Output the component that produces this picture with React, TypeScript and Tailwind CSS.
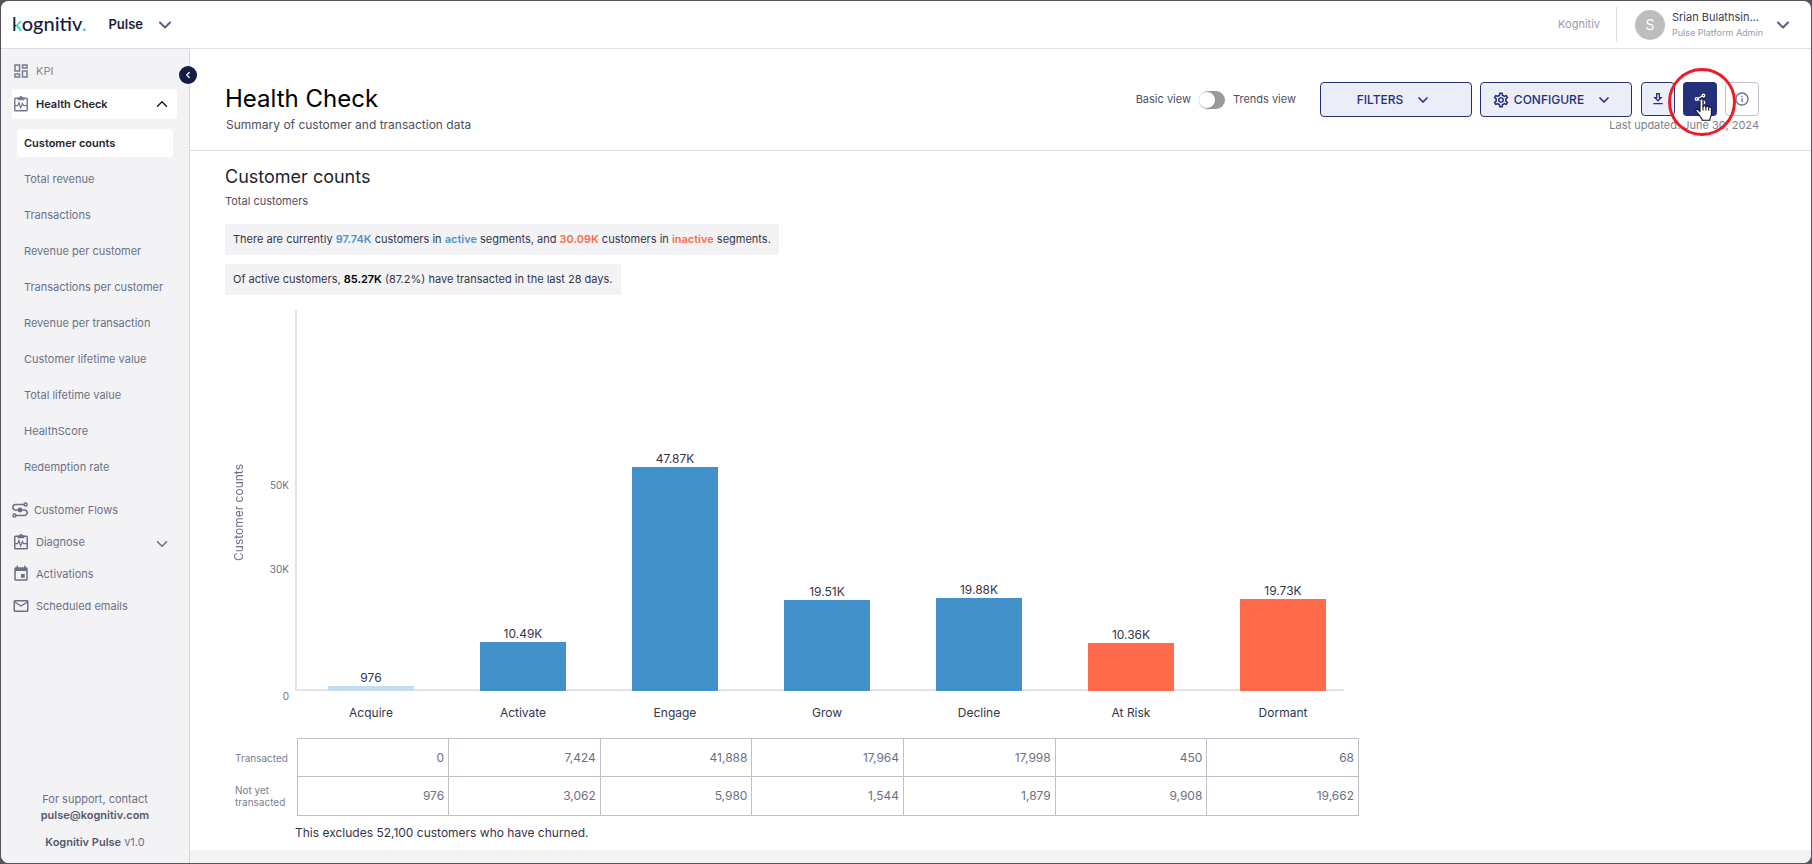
import React from "react";
import { ChevronDown, ChevronLeft, ChevronUp } from "lucide-react";
import { MdEvent, MdMailOutline, MdOutlineDashboard, MdOutlineDownload, MdOutlineInfo, MdOutlineSettings } from "react-icons/md";

const metrics = [
  "Total revenue",
  "Transactions",
  "Revenue per customer",
  "Transactions per customer",
  "Revenue per transaction",
  "Customer lifetime value",
  "Total lifetime value",
  "HealthScore",
  "Redemption rate",
];

const segments = [
  { name: "Acquire", label: "976", value: 976, transacted: "0", pending: "976", color: "bg-[#c5dbf2]" },
  { name: "Activate", label: "10.49K", value: 10490, transacted: "7,424", pending: "3,062", color: "bg-[#4291cb]" },
  { name: "Engage", label: "47.87K", value: 47870, transacted: "41,888", pending: "5,980", color: "bg-[#4291cb]" },
  { name: "Grow", label: "19.51K", value: 19510, transacted: "17,964", pending: "1,544", color: "bg-[#4291cb]" },
  { name: "Decline", label: "19.88K", value: 19880, transacted: "17,998", pending: "1,879", color: "bg-[#4291cb]" },
  { name: "At Risk", label: "10.36K", value: 10360, transacted: "450", pending: "9,908", color: "bg-[#ff6b4a]" },
  { name: "Dormant", label: "19.73K", value: 19730, transacted: "68", pending: "19,662", color: "bg-[#ff6b4a]" },
];

const PIXELS_PER_THOUSAND = 4.68;

function ClipboardPulse() {
  return (
    <svg viewBox="0 0 18 18" className="h-[18px] w-[18px] shrink-0" fill="none" stroke="currentColor" strokeWidth="1.5">
      <rect x="2.75" y="3.25" width="12.5" height="12.5" rx="0.8" />
      <path d="M5.6 5.2V2.6h1.8C7.4 1.5 8.1.9 9 .9s1.6.6 1.6 1.7h1.8v2.6z" fill="currentColor" stroke="none" />
      <path d="M3 10.6h2.7l1.2-3 1.8 5.4 1.7-4.6 1.2 2.2H15" strokeWidth="1.2" />
    </svg>
  );
}

function FlowIcon() {
  return (
    <svg viewBox="0 0 16 16" className="h-4 w-4 shrink-0" fill="none" stroke="currentColor" strokeWidth="1.5">
      <circle cx="13.6" cy="2.4" r="1.5" />
      <circle cx="2.4" cy="13.6" r="1.5" />
      <path d="M12 2.4H3.6a2.8 2.8 0 0 0 0 5.6h8.8a2.8 2.8 0 0 1 0 5.6H4" />
      <circle cx="8" cy="8" r="1.7" fill="currentColor" />
    </svg>
  );
}

function ShareIcon() {
  return (
    <svg viewBox="0 0 24 24" className="h-3 w-3" fill="none" stroke="currentColor" strokeWidth="2.4">
      <circle cx="19" cy="5" r="2.6" />
      <circle cx="5" cy="12" r="2.6" />
      <circle cx="19" cy="19" r="2.6" />
      <path d="M7.5 11 16.5 6M7.5 13l9 5" />
    </svg>
  );
}

function PointerHand() {
  return (
    <svg viewBox="0 0 18 24" className="absolute top-4 left-3 h-6 w-[18px]" fill="#fff" stroke="#111" strokeWidth="1.1" strokeLinejoin="round">
      <path d="M5 13.6V2.4C5 .3 8 .3 8 2.4v6.2c.3-1.2 2.7-1.2 2.9.3.5-1 2.6-.8 2.8.6.7-.8 2.7-.5 2.7 1.2v5.2c0 2.4-1.4 3.4-1.4 4.6v1.8H7v-1.4c-1.2-1-2.2-3-3.2-4.6C2.8 14.9.6 13.7.7 12.3c.2-1.4 2.1-1.4 4.3 1.3z" />
      <path d="M8 8.4v4M10.9 9v3.6M13.7 9.8v3" fill="none" />
    </svg>
  );
}

function Sidebar() {
  const row = "flex h-4 items-center gap-[6px] text-[11px] leading-4 text-[#6b7087]";
  return (
    <aside className="relative flex w-[189px] shrink-0 flex-col border-r border-[#d3d4da] bg-[#f3f3f6]">
      <button aria-label="Collapse menu" className="absolute top-[17px] -right-[8px] flex h-[18px] w-[18px] items-center justify-center rounded-full bg-[#151c45] text-white">
        <ChevronLeft className="h-[10px] w-[10px]" strokeWidth={3} />
      </button>
      <nav className="flex flex-col pt-[14px]">
        <a href="#kpi" className="flex h-4 items-center gap-[6px] pl-[11px] text-[11px] leading-4 text-[#85889a]">
          <MdOutlineDashboard className="h-[18px] w-[18px] shrink-0 text-[#777b90]" />
          KPI
        </a>
        <div className="mt-[10px] mr-3 ml-[11px] rounded-[4px] bg-white">
          <button className="flex h-[30px] w-full items-center gap-[6px] pr-[6px] text-[11px] font-semibold text-[#1e1f33]">
            <span className="text-[#777b90]"><ClipboardPulse /></span>
            Health Check
            <ChevronUp className="ml-auto h-[18px] w-[18px]" />
          </button>
        </div>
        <a href="#customer-counts" className="mt-[10px] mr-4 ml-4 flex h-7 items-center rounded-[4px] bg-white pl-[7px] text-[11px] font-semibold text-[#1e1f33]">
          Customer counts
        </a>
        <ul className="mt-1 flex flex-col">
          {metrics.map((m) => (
            <li key={m} className="flex h-9 items-center pl-[23px]">
              <a href="#metric" className="text-[11px] leading-4 text-[#6b7087]">{m}</a>
            </li>
          ))}
        </ul>
        <div className="mt-[17px] flex flex-col gap-4 pr-[18px] pl-[11px]">
          <a href="#flows" className={row}><FlowIcon />Customer Flows</a>
          <button className={row}><ClipboardPulse />Diagnose<ChevronDown className="mt-1 ml-auto h-[18px] w-[18px]" /></button>
          <a href="#activations" className={row}><MdEvent className="h-[18px] w-[18px]" />Activations</a>
          <a href="#emails" className={row}><MdMailOutline className="h-[18px] w-[18px]" />Scheduled emails</a>
        </div>
      </nav>
      <div className="mt-auto pb-[13px] text-center text-[11px] leading-4 text-[#6b7087]">
        <p>For support, contact</p>
        <a href="mailto:pulse@kognitiv.com" className="font-semibold text-[#55596f]">pulse@kognitiv.com</a>
        <p className="mt-[11px]"><span className="font-semibold text-[#55596f]">Kognitiv Pulse</span> v1.0</p>
      </div>
    </aside>
  );
}

function TopBar() {
  return (
    <header className="flex h-12 items-center border-b border-[#dddde3] bg-white pr-[18px] pl-[11px]">
      <a href="#home" className="pb-[3px] font-[Lato,sans-serif] text-[20px] leading-6 font-medium text-[#151c45]">
        <span className="bg-[linear-gradient(90deg,#151c45_4px,#1fd6cd_4px)] bg-clip-text text-transparent">k</span>ognitiv<span className="text-[#1fd6cd]">.</span>
      </a>
      <button className="ml-[22px] flex items-center gap-3 text-[13px] font-semibold text-[#1e1f33]">
        Pulse
        <ChevronDown className="h-5 w-5 text-[#5d6178]" strokeWidth={2.5} />
      </button>
      <span className="ml-auto text-[11px] text-[#9a9cae]">Kognitiv</span>
      <button className="ml-4 flex h-[35px] items-center border-l border-[#dddde3] pl-[18px] text-left">
        <span className="flex h-[30px] w-[30px] items-center justify-center rounded-full bg-[#bdbdbd] text-[14px] text-white">S</span>
        <span className="ml-[7px] flex w-[93px] flex-col">
          <span className="text-[11px] leading-4 text-[#3b3c4e]">Srian Bulathsin...</span>
          <span className="text-[9px] leading-4 whitespace-nowrap text-[#9a9cae]">Pulse Platform Admin</span>
        </span>
        <ChevronDown className="ml-2 h-5 w-5 text-[#5d6178]" strokeWidth={2.5} />
      </button>
    </header>
  );
}

function PageHeader() {
  const menu = "flex h-[35px] w-[152px] items-center justify-center rounded-[4px] border border-[#24317a] bg-[#ebedf8] text-[12px] font-medium text-[#24317a]";
  return (
    <section className="flex h-[102px] items-start justify-between border-b border-[#dddde3] pr-[52px] pl-[35px]">
      <div className="pt-[34px]">
        <h1 className="text-[24px] leading-8 text-black">Health Check</h1>
        <p className="pl-[1px] text-[12px] leading-5 text-[#4d4f61]">Summary of customer and transaction data</p>
      </div>
      <div className="flex flex-col items-end pt-[33px]">
        <div className="flex items-start">
          <label className="mr-[24px] flex h-[35px] items-center gap-2 text-[11px] text-[#4d4f61]">
            Basic view
            <input type="checkbox" role="switch" className="peer sr-only" />
            <span className="flex h-[18px] w-[26px] items-center rounded-full bg-[#9b9b9b]">
              <span className="h-4 w-4 rounded-full bg-white shadow-sm" />
            </span>
            Trends view
          </label>
          <button className={menu + " gap-3 pr-1"}>FILTERS<ChevronDown className="h-4 w-4" strokeWidth={2.5} /></button>
          <button className={menu + " ml-2 pr-2"}>
            <MdOutlineSettings className="mr-1 h-[18px] w-[18px]" />CONFIGURE<ChevronDown className="ml-3 h-4 w-4" strokeWidth={2.5} />
          </button>
          <div className="ml-[9px] flex gap-2">
            <button aria-label="Download" className="flex h-[34px] w-[34px] items-center justify-center rounded-[4px] border border-[#24317a] bg-[#ebedf8] text-[#24317a]">
              <MdOutlineDownload className="h-4 w-4" />
            </button>
            <div className="relative">
              <button aria-label="Share" className="flex h-[34px] w-[34px] items-center justify-center rounded-[4px] bg-[#24317a] text-white">
                <ShareIcon />
              </button>
              <span className="pointer-events-none absolute -top-[14px] -left-[15px] z-10 h-[68px] w-[68px] rounded-full border-[3px] border-[#ed1c24]" />
              <div className="pointer-events-none absolute inset-0 z-20"><PointerHand /></div>
            </div>
            <button aria-label="Information" className="flex h-[34px] w-[34px] items-center justify-center rounded-[4px] border border-[#c1c2cd] bg-white text-[#6b7087]">
              <MdOutlineInfo className="h-4 w-4" />
            </button>
          </div>
        </div>
        <p className="text-[11px] leading-4 text-[#7d7f8c]">Last updated: June 30, 2024</p>
      </div>
    </section>
  );
}

function CustomerChart() {
  return (
    <div className="mt-[15px] flex">
      <div className="flex w-[27px] items-center justify-center">
        <span className="mb-[6px] rotate-180 text-[12px] leading-4 whitespace-nowrap text-[#6b7087] [writing-mode:vertical-rl]">Customer counts</span>
      </div>
      <div className="flex w-[43px] flex-col items-end pt-[167px] pr-[6px] text-[10px] leading-4 text-[#6b7087]">
        <span>50K</span>
        <span className="mt-[68px]">30K</span>
        <span className="mt-[111px]">0</span>
      </div>
      <div className="relative w-full max-w-[1064px]">
        <div className="absolute top-0 right-[15px] left-0 h-[381px] border-b-2 border-l-2 border-[#e2e2e7]" />
        <div className="relative grid h-[381px] grid-cols-7 items-end">
          {segments.map((s) => (
            <div key={s.name} className="flex flex-col items-center">
              <span className="text-[12px] leading-4 text-[#33344a]">{s.label}</span>
              <div className={"w-[86px] " + s.color} style={{ height: Math.round((s.value / 1000) * PIXELS_PER_THOUSAND) }} />
            </div>
          ))}
        </div>
        <div className="mt-[14px] grid grid-cols-7 text-center text-[12px] leading-4 text-[#33344a]">
          {segments.map((s) => <span key={s.name}>{s.name}</span>)}
        </div>
      </div>
    </div>
  );
}

function CountsTable() {
  const head = "pl-[10px] text-left text-[10px] leading-3 font-normal text-[#7a7e93]";
  const cell = "border border-[#bfc0cb] pr-1 text-right text-[12px] text-[#6b7087]";
  return (
    <table className="mt-[17px] w-full max-w-[1134px] table-fixed border-collapse">
      <colgroup>
        <col className="w-[72px]" />
      </colgroup>
      <tbody>
        <tr className="h-[38px]">
          <th scope="row" className={head}>Transacted</th>
          {segments.map((s) => <td key={s.name} className={cell}>{s.transacted}</td>)}
        </tr>
        <tr className="h-[39px]">
          <th scope="row" className={head}>Not yet<br />transacted</th>
          {segments.map((s) => <td key={s.name} className={cell}>{s.pending}</td>)}
        </tr>
      </tbody>
    </table>
  );
}

export default function App() {
  const note = "w-fit bg-[#f3f3f6] px-2 py-[7px] text-[11px] leading-[17px] text-[#33344a]";
  return (
    <div className="flex min-h-screen flex-col bg-[#55545a] p-[1px] font-[Inter,sans-serif]">
      <div className="flex flex-1 flex-col overflow-hidden rounded-[8px] bg-white">
        <TopBar />
        <div className="flex flex-1">
          <Sidebar />
          <main className="flex min-w-0 flex-1 flex-col">
            <PageHeader />
            <section className="flex-1 pr-[52px] pl-[35px]">
              <h2 className="mt-[14px] text-[18px] leading-6 text-[#1e1f33]">Customer counts</h2>
              <p className="mt-1 text-[11px] leading-4 text-[#4d4f61]">Total customers</p>
              <p className={note + " mt-[15px]"}>
                There are currently <b className="font-semibold text-[#4f93cd]">97.74K</b> customers in <b className="font-semibold text-[#4f93cd]">active</b> segments, and <b className="font-semibold text-[#ff6b4a]">30.09K</b> customers in <b className="font-semibold text-[#ff6b4a]">inactive</b> segments.
              </p>
              <p className={note + " mt-[9px]"}>
                Of active customers, <b className="font-semibold text-black">85.27K</b> (87.2%) have transacted in the last 28 days.
              </p>
              <CustomerChart />
              <CountsTable />
              <p className="mt-[9px] pl-[70px] text-[12px] leading-4 text-[#33344a]">This excludes 52,100 customers who have churned.</p>
            </section>
            <div className="h-[13px] bg-[#f3f3f6]" />
          </main>
        </div>
      </div>
    </div>
  );
}
